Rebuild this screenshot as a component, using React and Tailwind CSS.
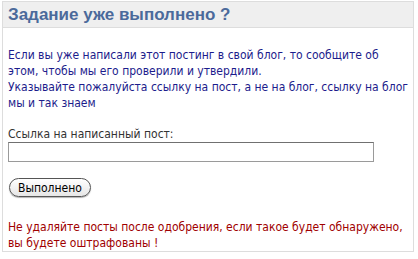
import React from 'react';

const App = () => {
  return (
    <div className="w-[418px] h-[259px] bg-white pt-px pl-[2px]">
      <div className="w-[412px] h-[251px] border border-[#dddddd] flex flex-col">
        <div className="h-[30px] bg-[#efefef] border-b border-[#dddddd] px-[5px] flex items-center">
          <h2 className="text-[17px] font-bold text-[#4b6a9b] leading-none" style={{ fontFamily: '"Liberation Sans", Arial, sans-serif' }}>
            Задание уже выполнено ?
          </h2>
        </div>
        <div className="px-[5px] pt-[19px] text-[12px] leading-[16px]" style={{ fontFamily: '"DejaVu Sans Condensed", "DejaVu Sans", sans-serif' }}>
          <p className="text-[#1c1c8c]">
            Если вы уже написали этот постинг в свой блог, то сообщите об этом, чтобы мы его проверили и утвердили.
            <br />
            Указывайте пожалуйста ссылку на пост, а не на блог, ссылку на блог мы и так знаем
          </p>
          <label className="block mt-[15px] text-[#333333]">Ссылка на написанный пост:</label>
          <input
            type="text"
            className="block w-[366px] h-[20px] border border-[#9a9a9a] border-t-[#707070] bg-white"
          />
          <button className="mt-[16px] ml-px h-[19px] px-[8px] rounded-full border border-[#555555] bg-gradient-to-b from-white to-[#e6e6e6] text-[12px] text-black leading-none shadow-[0_1px_1px_rgba(0,0,0,0.3)]">
            Выполнено
          </button>
          <p className="mt-[22px] text-[#a00000]">
            Не удаляйте посты после одобрения, если такое будет обнаружено, вы будете оштрафованы !
          </p>
        </div>
      </div>
    </div>
  );
};

export default App;
